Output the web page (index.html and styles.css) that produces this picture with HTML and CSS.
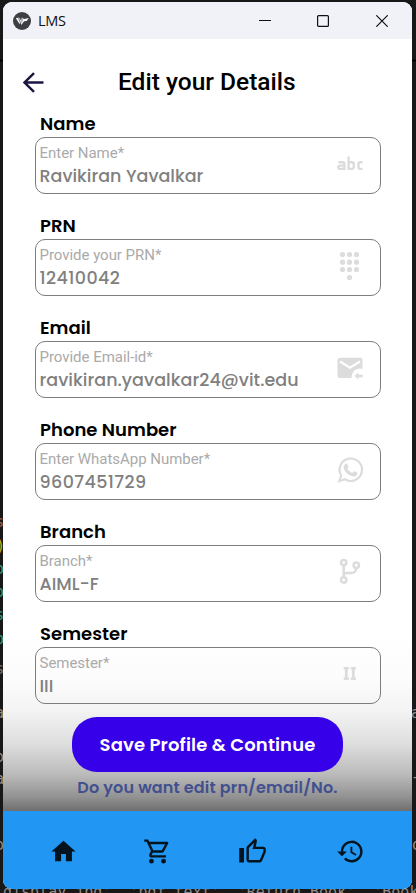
FILE: index.html
```html
<!DOCTYPE html>
<html lang="en">
<head>
<meta charset="utf-8">
<title>LMS</title>
<link rel="stylesheet" href="styles.css">
</head>
<body>
<svg class="editor" viewBox="0 0 416 893" aria-hidden="true">
  <g class="code">
    <text x="-5" y="527" fill="#a5634c">s</text>
    <text x="-4" y="551" fill="#c9b219">)</text>
    <text x="-5" y="574" fill="#2d9f82">o</text>
    <text x="-5" y="597" fill="#2d9f82">o</text>
    <text x="-5" y="620" fill="#2d9f82">s</text>
    <text x="-5" y="644" fill="#2d9f82">p</text>
    <text x="-5" y="674" fill="#777">s</text>
    <text x="-5" y="718">a</text>
    <text x="-5" y="762">o</text>
    <text x="-5" y="784">a</text>
    <text x="-5" y="850">o</text>
    <text x="411" y="718">a</text>
    <text x="411" y="782">-</text>
    <text x="412" y="850">o</text>
    <text x="3" y="897">display.jpg', 'pdf_text', 'Return_Book', 'Book</text>
  </g>
  <path d="M0 60.500h3M412 60.500h4" stroke="#000" stroke-width="2"/>
</svg>
<main class="window">
  <header class="titlebar">
    <svg class="logo" viewBox="0 0 18 18"><circle cx="9" cy="9" r="9" fill="#3c3e42"/><path d="M2.800 6.200 6 5.500l2 3 .8-3L11 7l4.800-1-2 3-2.600.3-3 3.700-.5-2.500L6.500 12z" fill="#f3f4f6"/><path d="m5.500 6 2 5M9.300 6.500l-.6 4" stroke="#3c3e42" stroke-width=".6"/></svg>
    <span class="app-name">LMS</span>
    <svg class="control" viewBox="0 0 12 12"><path d="M0 5.500h12"/></svg>
    <svg class="control" viewBox="0 0 12 12"><rect x=".6" y=".6" width="10.800" height="10.800" rx="1"/></svg>
    <svg class="control" viewBox="0 0 12 12"><path d="m.3.3 11.400 11.400M11.700.3.3 11.700"/></svg>
  </header>
  <section class="screen">
    <div class="heading">
      <svg class="back" viewBox="0 0 20 20"><path d="M19.500 10H1.500M10.500 1 1.500 10l9 9"/></svg>
      <h1>Edit your Details</h1>
    </div>
    <div class="field">
      <label>Name</label>
      <div class="box"><div><span class="hint">Enter Name*</span><span class="value">Ravikiran Yavalkar</span></div>
        <svg class="icon line" viewBox="0 0 26 26"><path d="M1.500 11.200h4.200q1.700 0 1.700 1.700v5H3q-1.700 0-1.700-1.700T3 14.600h4.400M11.600 5.500v12.400H15q1.800 0 1.800-1.800v-3.100q0-1.800-1.800-1.800h-3.400M25.500 11.200H23q-1.500 0-1.500 1.800v3.100q0 1.800 1.500 1.800h2.500" stroke-width="2.400"/></svg></div>
    </div>
    <div class="field">
      <label>PRN</label>
      <div class="box"><div><span class="hint">Provide your PRN*</span><span class="value digits">12410042</span></div>
        <svg class="icon" viewBox="0 0 26 26"><circle cx="5.500" cy="1.500" r="2.600"/><circle cx="12.500" cy="1.500" r="2.600"/><circle cx="19.500" cy="1.500" r="2.600"/><circle cx="5.500" cy="9.200" r="2.600"/><circle cx="12.500" cy="9.200" r="2.600"/><circle cx="19.500" cy="9.200" r="2.600"/><circle cx="5.500" cy="16.500" r="2.600"/><circle cx="12.500" cy="16.500" r="2.600"/><circle cx="19.500" cy="16.500" r="2.600"/><circle cx="12.500" cy="24.500" r="2.600"/></svg></div>
    </div>
    <div class="field">
      <label>Email</label>
      <div class="box"><div><span class="hint">Provide Email-id*</span><span class="value email">ravikiran.yavalkar24@vit.edu</span></div>
        <svg class="icon" viewBox="0 0 26 26"><path d="M3 2.700h20.500q2 0 2 2V14q-4-1.400-7.500 1-3.200 2.500-3.500 8H3q-2.500 0-2.500-2.500V5Q.5 2.700 3 2.700z"/><path d="m3 6.500 10 6.200 10-6.200" fill="none" stroke="#fff" stroke-width="2.300"/><path d="m21.500 17.500-4 3.500 4 3.500v-2.300h4.300v-2.400h-4.300z"/></svg></div>
    </div>
    <div class="field">
      <label>Phone Number</label>
      <div class="box"><div><span class="hint">Enter WhatsApp Number*</span><span class="value digits">9607451729</span></div>
        <svg class="icon" viewBox="0 0 26 26"><path d="M2.300 24 4.200 18.500A11.200 11.200 0 1 1 8 22.300z" fill="none" stroke="#dcdcdc" stroke-width="2.200"/><path d="M8.300 6.700q.8-.8 1.700 0l1.400 3q.2.700-1.100 2 1.800 3.200 5 4.200l1.500-1.700q.5-.3 3.300 1.300.6.400.2 1.700-1 2.500-4.200 2.200-7.200-1.800-9.300-8-.2-3 1.500-4.700z"/></svg></div>
    </div>
    <div class="field">
      <label>Branch</label>
      <div class="box"><div><span class="hint">Branch*</span><span class="value">AIML-F</span></div>
        <svg class="icon line" viewBox="0 0 26 26"><g stroke-width="2.500"><circle cx="6.700" cy="3.600" r="2.700"/><circle cx="6.700" cy="21" r="2.700"/><circle cx="19.300" cy="6.300" r="2.700"/><path d="M6.700 6.500v11.800M6.700 16q.5-2 3.500-2h4q4.600 0 5.100-5"/></g></svg></div>
    </div>
    <div class="field">
      <label>Semester</label>
      <div class="box"><div><span class="hint">Semester*</span><span class="value">III</span></div>
        <svg class="icon" viewBox="0 0 26 26"><path d="M6.700 6h5.200v2.600h-1.200v7.800h1.200V19H6.700v-2.600h1.200V8.600H6.700zM13.700 6h5.200v2.600h-1.200v7.800h1.200V19h-5.200v-2.600h1.200V8.600h-1.200z"/></svg></div>
    </div>
    <button class="save">Save Profile &amp; Continue</button>
    <p class="note">Do you want edit prn/email/No.</p>
  </section>
  <nav class="tabs">
    <svg viewBox="0 0 24 24"><path d="M10 20v-6h4v6h5v-8h3L12 3 2 12h3v8z"/></svg>
    <svg viewBox="0 0 24 24"><path d="M15.550 13c.75 0 1.410-.41 1.750-1.030l3.580-6.490A.996.996 0 0 0 20.010 4H5.210l-.94-2H1v2h2l3.600 7.590-1.350 2.440C4.520 15.370 5.480 17 7 17h12v-2H7l1.100-2h7.450zM6.160 6h12.150l-2.760 5H8.530L6.160 6zM7 18a2 2 0 1 0 0 4 2 2 0 0 0 0-4zm10 0a2 2 0 1 0 0 4 2 2 0 0 0 0-4z"/></svg>
    <svg viewBox="0 0 24 24"><path d="M9 21h9c.83 0 1.540-.5 1.840-1.220l3.020-7.050c.09-.23.14-.47.14-.73v-2c0-1.100-.9-2-2-2h-6.310l.95-4.570.03-.32c0-.41-.17-.79-.44-1.060L14.170 1 7.580 7.590C7.220 7.950 7 8.450 7 9v10c0 1.100.9 2 2 2zM9 9l4.340-4.340L12 10h9v2l-3 7H9V9zM1 9h4v12H1z"/></svg>
    <svg viewBox="0 0 24 24"><path d="M13 3a9 9 0 0 0-9 9H1l3.890 3.890.07.14L9 12H6c0-3.870 3.130-7 7-7s7 3.130 7 7-3.130 7-7 7c-1.930 0-3.680-.79-4.940-2.060l-1.420 1.420A9 9 0 1 0 13 3zm-1 5v5l4.280 2.540.72-1.210-3.500-2.080V8z"/></svg>
  </nav>
</main>
</body>
</html>
```
FILE: styles.css
```css
* { box-sizing: border-box; }
body {
  margin: 0; width: 416px; height: 893px; padding: 2px 4px 4px 3px;
  overflow: hidden; background: #181818;
  font-family: Poppins, Inter, sans-serif;
  font-kerning: none;
}
.editor { position: absolute; left: 0; top: 0; width: 416px; height: 893px; }
.code { font: 15px "DejaVu Sans Mono", monospace; fill: #8d8d8d; white-space: pre; }
.window {
  position: relative;
  height: 887px; display: flex; flex-direction: column;
  border-radius: 9px; overflow: hidden; background: #fff;
}
.titlebar {
  height: 37px; flex: none; display: flex; align-items: center;
  padding: 0 24.500px 0 10px; background: #f0f2f8;
}
.logo { width: 18px; height: 18px; }
.app-name {
  flex: 1; margin-left: 7px; margin-top: -1px;
  font: 14.500px "Open Sans", sans-serif; letter-spacing: -.3px; color: #111;
}
.control { width: 12px; height: 12px; margin-left: 46.500px; fill: none; stroke: #111; stroke-width: 1.200; }
.screen {
  height: 772px; flex: none; display: flex; flex-direction: column;
  background: linear-gradient(#fff 590px, #fcfcfc 640px, #f4f4f4 670px, #dedede 705px, #bbb 735px, #929292 758px, #6e6e6e 772px);
}
.heading { height: 72px; display: flex; align-items: center; padding: 14px 0 0 20px; }
.back { width: 21px; height: 21px; fill: none; stroke: #1b1642; stroke-width: 2.300; }
h1 { margin: -2px 0 0 74px; font: 500 24.500px Roboto, sans-serif; color: #000; white-space: nowrap; }
.field { height: 102px; flex: none; padding: 0 31.500px; }
label { display: block; height: 26px; padding-left: 5.500px; font-size: 18px; font-weight: 600; line-height: 25px; letter-spacing: .03px; }
.box {
  height: 57px; display: flex; justify-content: space-between;
  border: 1px solid #7d7d7d; border-radius: 10px; padding: 6px 17px 0 4px;
}
.hint { display: block; height: 20px; font: 15px/19px Roboto, sans-serif; letter-spacing: -.03px; color: #aaa; }
.value { display: block; height: 25px; font-size: 17.500px; font-weight: 500; line-height: 25px; color: #808080; white-space: nowrap; }
.digits { letter-spacing: .4px; }
.email { letter-spacing: .06px; }
.icon { width: 26px; height: 26px; margin-top: 7px; overflow: visible; fill: #dcdcdc; }
.line { fill: none; stroke: #dcdcdc; }
.save {
  align-self: center; flex: none; width: 271px; height: 55px; margin: -6px 0 0; padding: 0;
  border: 0; border-radius: 25px; background: #3600e8; color: #fff;
  font: 600 18px Poppins, Inter, sans-serif; letter-spacing: .12px; white-space: nowrap;
}
.note { margin: 2px 0 0; text-align: center; font-size: 16px; line-height: 27px; font-weight: 600; letter-spacing: .15px; color: #42508f; }
.tabs { height: 78px; flex: none; display: grid; grid-template-columns: 94px 94.500px 98px 29px; align-items: center; padding: 3px 0 0 46px; background: #2196f3; }
.tabs svg { width: 29px; height: 29px; fill: #03141f; }
```
